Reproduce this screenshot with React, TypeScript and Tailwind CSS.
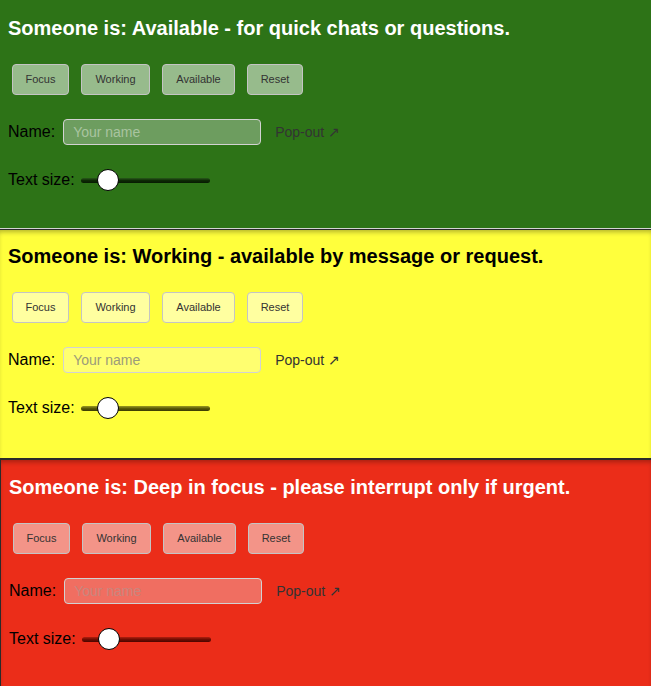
import React from "react";

type Status = {
  heading: string;
  bg: string;
  headColor: string;
  btnBg: string;
  inputBg: string;
  track: string;
  frame: string;
};

const statuses: Status[] = [
  {
    heading: "Someone is: Available - for quick chats or questions.",
    bg: "bg-[#2d7317] border-b border-[#d4d4d4]",
    headColor: "text-white",
    btnBg: "bg-[#97bb8c]",
    inputBg: "bg-[#6d9d5f] placeholder:text-[#a9c4a0]",
    track: "bg-gradient-to-b from-[#2a5a1c] via-[#0d2a05] to-[#071a02]",
    frame: "h-[229px] pt-[16px] pl-2",
  },
  {
    heading: "Someone is: Working - available by message or request.",
    bg: "bg-[#ffff3c] border-t border-[#2a2a2a] shadow-[inset_0_4px_5px_-2px_rgba(0,0,0,0.3)]",
    headColor: "text-black",
    btnBg: "bg-[#ffffa0]",
    inputBg: "bg-[#ffff70] placeholder:text-[#9c9c7a]",
    track: "bg-gradient-to-b from-[#9a9a20] via-[#5a5a08] to-[#3a3a02]",
    frame: "h-[229px] pt-[14px] pl-2",
  },
  {
    heading: "Someone is: Deep in focus - please interrupt only if urgent.",
    bg: "bg-[#eb2d19] border-t-2 border-l border-[#2a2a2a] shadow-[inset_0_4px_5px_-2px_rgba(0,0,0,0.3)]",
    headColor: "text-white",
    btnBg: "bg-[#f39488]",
    inputBg: "bg-[#f06e61] placeholder:text-[#c8867e]",
    track: "bg-gradient-to-b from-[#b02010] via-[#700c02] to-[#4a0600]",
    frame: "flex-1 pt-[15px] pl-2",
  },
];

const widths: Record<string, string> = {
  Focus: "w-[57px]",
  Working: "w-[69px]",
  Available: "w-[73px]",
  Reset: "w-[56px]",
};

function Panel({ s }: { s: Status }) {
  return (
    <div className={`${s.bg} ${s.frame} pr-2 overflow-hidden`}>
      <h2 className={`${s.headColor} text-[20px] font-bold leading-[24px]`}>{s.heading}</h2>
      <div className="flex gap-3 ml-1 mt-[24px]">
        {["Focus", "Working", "Available", "Reset"].map((b) => (
          <button
            key={b}
            className={`${s.btnBg} ${widths[b]} h-[31px] text-[11px] text-[#333] border border-[#c4c4c4] rounded-[4px]`}
          >
            {b}
          </button>
        ))}
      </div>
      <div className="flex items-center mt-[24px] h-[26px]">
        <span className="text-[16px] text-black">Name:</span>
        <input
          placeholder="Your name"
          className={`${s.inputBg} ml-[8px] w-[198px] h-[26px] px-[9px] text-[14px] border border-[#d2d2d2] rounded-[4px] outline-none`}
        />
        <span className="ml-[14px] text-[14px] text-[#333]">Pop-out ↗</span>
      </div>
      <div className="flex items-center mt-[23px] h-[24px]">
        <span className="text-[16px] text-black">Text size:</span>
        <div className="relative ml-[6px] w-[129px] h-[22px] flex items-center">
          <div className={`${s.track} w-full h-[5px] rounded-full`} />
          <div className="absolute left-[16px] top-0 w-[22px] h-[22px] rounded-full bg-white border border-black" />
        </div>
      </div>
    </div>
  );
}

export default function App() {
  return (
    <div className="w-[651px] h-[686px] flex flex-col overflow-hidden font-['Liberation_Sans',Arial,sans-serif]">
      {statuses.map((s) => (
        <Panel key={s.heading} s={s} />
      ))}
    </div>
  );
}
